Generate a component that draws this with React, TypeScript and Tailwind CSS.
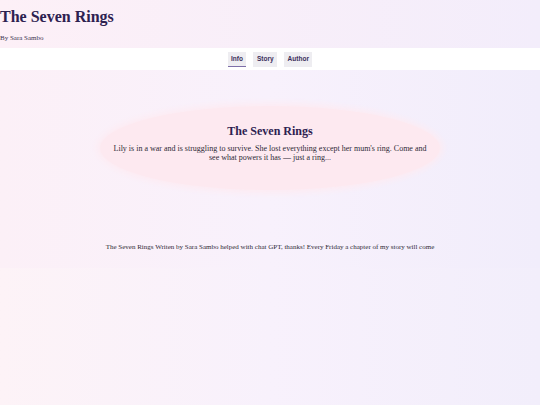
import { useState } from 'react';

const serif = { fontFamily: '"Liberation Serif", "DejaVu Serif", serif' };

export default function App() {
  const [tab, setTab] = useState('Info');
  const tabs = ['Info', 'Story', 'Author'];

  return (
    <div
      className="min-h-[405px] w-full bg-gradient-to-r from-[#fdf3f7] via-[#f8f1fc] to-[#f2eefb]"
      style={serif}
    >
      <header className="h-[48px] bg-gradient-to-r from-[#fdf0f7] to-[#f3edfb] pt-[7px]">
        <h1 className="text-[16px] font-bold leading-[20px] text-[#2d2150]">The Seven Rings</h1>
        <p className="mt-[6px] text-[7px] leading-[10px] text-[#3a3350]">By Sara Sambo</p>
      </header>

      <nav
        className="flex h-[22px] items-center justify-center gap-[7px] bg-white"
        style={{ fontFamily: '"Liberation Sans", Arial, sans-serif' }}
      >
        {tabs.map((t) => (
          <button
            key={t}
            onClick={() => setTab(t)}
            className={
              t === tab
                ? 'h-[15px] border-b-[1.5px] border-[#7e6fa8] bg-[#eeedf1] px-[3.5px] text-[6.5px] font-bold text-[#3b2f5a]'
                : 'h-[15px] bg-[#eeedf1] px-[3.5px] text-[6.5px] font-bold text-[#3b2f5a]'
            }
          >
            {t}
          </button>
        ))}
      </nav>

      <main className="flex h-[198px] flex-col items-center bg-gradient-to-r from-[#fcf0f7] via-[#f8f1fc] to-[#f1edfb] pt-[36px]">
        <section className="flex h-[84px] w-[340px] flex-col items-center rounded-[50%] bg-[#fde9f0] px-[12px] pt-[18px] text-center shadow-[0_0_6px_3px_#fdebf2]">
          <h2 className="text-[12px] font-bold leading-[15px] text-[#2d2150]">The Seven Rings</h2>
          <p className="mt-[5px] text-[8px] leading-[9px] text-[#2e2a36]">
            Lily is in a war and is struggling to survive. She lost everything except her mum's ring. Come and
            see what powers it has — just a ring...
          </p>
        </section>
        <p className="mt-[52px] text-[7px] leading-[10px] text-[#2e2a36]">
          The Seven Rings Writen by Sara Sambo helped with chat GPT, thanks! Every Friday a chapter of my story will come
        </p>
      </main>
    </div>
  );
}
